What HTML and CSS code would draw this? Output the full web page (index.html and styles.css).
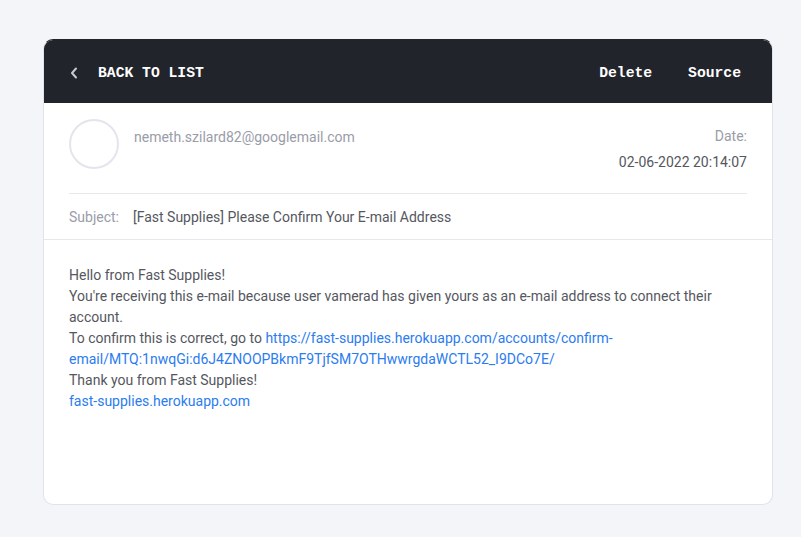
FILE: index.html
```html
<!DOCTYPE html>
<html>
<head>
<meta charset="utf-8">
<link rel="stylesheet" href="styles.css">
</head>
<body>
<div class="card">
  <div class="topbar">
    <a class="back">
      <svg class="chev" width="8" height="12" viewBox="0 0 8 12"><path d="M6 1.5 L2 6 L6 10.5" fill="none" stroke="#c9cad0" stroke-width="2" stroke-linecap="round" stroke-linejoin="round"/></svg>
      <span>BACK TO LIST</span>
    </a>
    <div class="actions">
      <span>Delete</span>
      <span>Source</span>
    </div>
  </div>
  <div class="meta">
    <div class="from">
      <div class="avatar"></div>
      <div class="addr">nemeth.szilard82@googlemail.com</div>
      <div class="date">
        <div class="date-label">Date:</div>
        <div class="date-value">02-06-2022 20:14:07</div>
      </div>
    </div>
    <div class="subject">
      <span class="subject-label">Subject:</span>
      <span class="subject-text">[Fast Supplies] Please Confirm Your E-mail Address</span>
    </div>
  </div>
  <div class="body">
    Hello from Fast Supplies!<br>
    You're receiving this e-mail because user vamerad has given yours as an e-mail address to connect their account.<br>
    To confirm this is correct, go to <a href="#">https://fast-supplies.herokuapp.com/accounts/confirm-email/MTQ:1nwqGi:d6J4ZNOOPBkmF9TjfSM7OTHwwrgdaWCTL52_I9DCo7E/</a><br>
    Thank you from Fast Supplies!<br>
    <a href="#">fast-supplies.herokuapp.com</a>
  </div>
</div>
</body>
</html>
```

FILE: styles.css
```css
html, body {
  margin: 0;
  padding: 0;
  background: #f4f5f8;
  font-family: Roboto, "Liberation Sans", sans-serif;
}

.card {
  margin: 39px 0 0 43px;
  width: 728px;
  height: 464px;
  background: #ffffff;
  border: 1px solid #e1e2ee;
  border-top-color: #22242b;
  border-radius: 10px;
  overflow: hidden;
}

.topbar {
  box-sizing: border-box;
  height: 63px;
  background: #22242b;
  display: flex;
  align-items: center;
  justify-content: space-between;
  padding: 2px 31px 0 26px;
  font-family: "Liberation Mono", "DejaVu Sans Mono", monospace;
  font-weight: bold;
  font-size: 14.7px;
  color: #ffffff;
}

.back {
  display: flex;
  align-items: center;
  gap: 20px;
}

.chev {
  display: block;
}

.actions {
  display: flex;
  gap: 36px;
}

.meta {
  padding: 16px 25px 0 25px;
  border-bottom: 1px solid #e8e8ec;
}

.from {
  display: flex;
  align-items: flex-start;
  padding-bottom: 23px;
  border-bottom: 1px solid #e8e8ec;
}

.avatar {
  width: 46px;
  height: 46px;
  border: 2px solid #e4e4ee;
  border-radius: 50%;
  flex: none;
}

.addr {
  margin-left: 15px;
  margin-top: 10px;
  font-size: 14px;
  color: #9a9ca8;
  flex: 1;
}

.date {
  margin-top: 9px;
  text-align: right;
  font-size: 14px;
}

.date-label {
  color: #9a9ca8;
}

.date-value {
  margin-top: 10px;
  color: #555760;
}

.subject {
  padding: 15px 0 14px 0;
  font-size: 14px;
  display: flex;
  gap: 14px;
}

.subject-label {
  color: #9a9ca8;
}

.subject-text {
  color: #555760;
}

.body {
  padding: 25px 25px 24px 25px;
  font-size: 14px;
  line-height: 21px;
  color: #555760;
}

.body a {
  color: #2b7cf0;
  text-decoration: none;
}
```
